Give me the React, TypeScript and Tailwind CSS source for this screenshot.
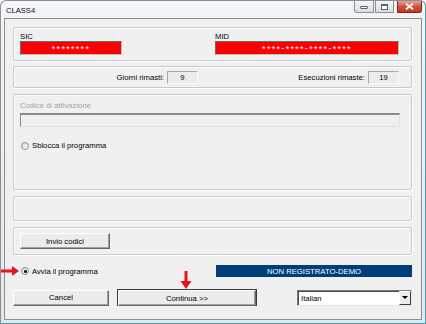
import React from "react";

const Radio = ({ checked }: { checked?: boolean }) => (
  <span className="w-[8px] h-[8px] rounded-full border border-[#8e8f8f] bg-gradient-to-br from-[#d4d4d4] to-white flex items-center justify-center shrink-0">
    {checked && <span className="w-[3px] h-[3px] rounded-full bg-black" />}
  </span>
);

const Group = ({ className = "", children }: { className?: string; children?: React.ReactNode }) => (
  <div
    className={
      "border border-[#c9c9c9] rounded-[2px] shadow-[inset_1px_1px_0_#ffffff,1px_1px_0_#ffffff] " + className
    }
  >
    {children}
  </div>
);

const Btn = ({ className = "", children }: { className?: string; children?: React.ReactNode }) => (
  <div
    className={
      "h-[16px] bg-[#ececec] border border-t-white border-l-white border-r-[#696969] border-b-[#696969] shadow-[inset_-1px_-1px_0_#a0a0a0] flex items-center justify-center " +
      className
    }
  >
    {children}
  </div>
);

const Stars = ({ n }: { n: number }) => <span className="align-[-1px]">{"*".repeat(n)}</span>;

export default function App() {
  return (
    <div className="w-[426px] h-[324px] overflow-hidden bg-white font-['Liberation_Sans',Arial,sans-serif] text-[7.7px] leading-[9px] text-black">
      <div className="relative w-[426px] h-[324px] rounded-t-[6px] border border-[#8a8f96] border-r-[#3aa3b5] border-b-[#3aa3b5] bg-gradient-to-b from-[#f2f4f7] to-[#e4e8ed] flex flex-col">
        {/* Title bar */}
        <div className="h-[17px] flex items-start justify-between pl-[5px] pr-[3px]">
          <span className="mt-[5px] text-[7.6px] text-[#111]">CLASS4</span>
          <div className="flex items-start gap-[1px]">
            <div className="w-[20px] h-[12px] border border-t-0 border-[#8b9097] rounded-bl-[3px] bg-gradient-to-b from-[#f4f6f8] to-[#d9dde2] flex items-end justify-center pb-[3px]">
              <span className="w-[8px] h-[3px] rounded-[1px] border border-[#5d636a] bg-white" />
            </div>
            <div className="w-[19px] h-[12px] border border-t-0 border-[#8b9097] bg-gradient-to-b from-[#f4f6f8] to-[#d9dde2] flex items-center justify-center">
              <span className="w-[7px] h-[6px] border border-[#5d636a] border-t-2 bg-white" />
            </div>
            <div className="ml-[2px] w-[25px] h-[12px] border border-t-0 border-[#7a2a22] rounded-br-[3px] bg-gradient-to-b from-[#e8a493] via-[#d0523e] to-[#c23a26] flex items-center justify-center">
              <svg width="9" height="7" viewBox="0 0 9 7">
                <path d="M1 0.8 L8 6.2 M8 0.8 L1 6.2" stroke="#fff" strokeWidth="1.8" />
              </svg>
            </div>
          </div>
        </div>

        {/* Client area */}
        <div className="ml-[3px] mr-[3px] mb-[3px] flex-1 border border-[#8e8f8f] bg-[#f0f0f0] pl-[8px] pr-[9px] pt-[8px] flex flex-col">
          {/* Group 1 */}
          <Group className="h-[34px] pl-[6px] pr-[12px] pt-[4px] flex gap-[93px]">
            <div className="flex flex-col">
              <span className="h-[9px]">SIC</span>
              <div className="w-[102px] h-[14px] bg-[#ff0000] border border-[#6a6a6a] border-r-[#c0c0c0] border-b-[#c0c0c0] flex items-center justify-center text-white text-[9px] tracking-[1.3px] pt-[2px]">
                <span>
                  <Stars n={8} />
                </span>
              </div>
            </div>
            <div className="flex flex-col flex-1">
              <span className="h-[9px]">MID</span>
              <div className="h-[14px] bg-[#ff0000] border border-[#6a6a6a] border-r-[#c0c0c0] border-b-[#c0c0c0] flex items-center justify-center text-white text-[9px] tracking-[1.3px] pt-[1px]">
                <span>
                  <Stars n={4} />-<Stars n={4} />-<Stars n={4} />-<Stars n={4} />
                </span>
              </div>
            </div>
          </Group>

          {/* Group 2 */}
          <Group className="mt-[5px] h-[22px] flex items-center">
            <div className="w-[184px] flex items-center justify-end gap-[3px]">
              <span>Giorni rimasti:</span>
              <div className="w-[31px] h-[13px] border border-[#a8a8a8] border-r-[#f8f8f8] border-b-[#f8f8f8] bg-[#ececec] flex items-center justify-center">
                9
              </div>
            </div>
            <div className="w-[201px] flex items-center justify-end gap-[3px]">
              <span>Esecuzioni rimaste:</span>
              <div className="w-[31px] h-[13px] border border-[#a8a8a8] border-r-[#f8f8f8] border-b-[#f8f8f8] bg-[#ececec] flex items-center justify-center">
                19
              </div>
            </div>
          </Group>

          {/* Group 3 */}
          <Group className="mt-[6px] h-[96px] pl-[6px] pr-[11px] pt-[6px] flex flex-col">
            <span className="text-[#a3a3a3] h-[10px]">Codice di attivazione</span>
            <div className="mt-[2px] h-[14px] border border-t-2 border-[#8a8a8a] border-r-[#e2e2e2] border-b-[#e2e2e2] bg-[#f0f0f0]" />
            <div className="mt-[14px] flex items-center gap-[3px] pl-[1px]">
              <Radio />
              <span>Sblocca il programma</span>
            </div>
          </Group>

          {/* Group 4 */}
          <Group className="mt-[6px] h-[25px]" />

          {/* Group 5 */}
          <Group className="mt-[6px] h-[28px] pl-[6px] flex items-center">
            <Btn className="w-[90px]">Invio codici</Btn>
          </Group>

          {/* Avvia row */}
          <div className="mt-[10px] h-[12px] flex items-center">
            <div className="flex items-center gap-[3px] pl-[8px] w-[203px]">
              <Radio checked />
              <span>Avvia il programma</span>
            </div>
            <div className="flex-1 h-[12px] bg-[#003d7b] text-white flex items-center justify-center">
              NON REGISTRATO-DEMO
            </div>
          </div>

          {/* Button row */}
          <div className="mt-[12px] h-[17px] flex items-center">
            <Btn className="w-[96px]">Cancel</Btn>
            <div className="ml-[8px] w-[140px] h-[17px] border border-[#3c3c3c] flex">
              <Btn className="flex-1 h-[15px]">Continua &gt;&gt;</Btn>
            </div>
            <div className="ml-[40px] flex-1 h-[16px] border border-[#7a7a7a] border-r-[#e6e6e6] border-b-[#e6e6e6] bg-white flex">
              <div className="flex-1 flex items-center pl-[2px] border border-[#4a4a4a] border-r-0 border-b-0">
                Italian
              </div>
              <div className="w-[12px] bg-[#ececec] border border-t-white border-l-white border-r-[#404040] border-b-[#404040] flex items-center justify-center">
                <svg width="6" height="3" viewBox="0 0 6 3">
                  <path d="M0 0 L6 0 L3 3 Z" fill="#000" />
                </svg>
              </div>
            </div>
          </div>
        </div>

        {/* Red arrows (overlay) */}
        <svg className="absolute left-0 top-[264px]" width="19" height="12" viewBox="0 0 19 12">
          <path d="M0 4.5 H11 V1 L18 6 L11 11 V7.5 H0 Z" fill="#e8141b" />
        </svg>
        <svg className="absolute left-[179px] top-[270px]" width="12" height="19" viewBox="0 0 12 19">
          <path d="M4.5 0 H7.5 V10 H11.5 L6 18 L0.5 10 H4.5 Z" fill="#e8141b" />
        </svg>
      </div>
    </div>
  );
}
